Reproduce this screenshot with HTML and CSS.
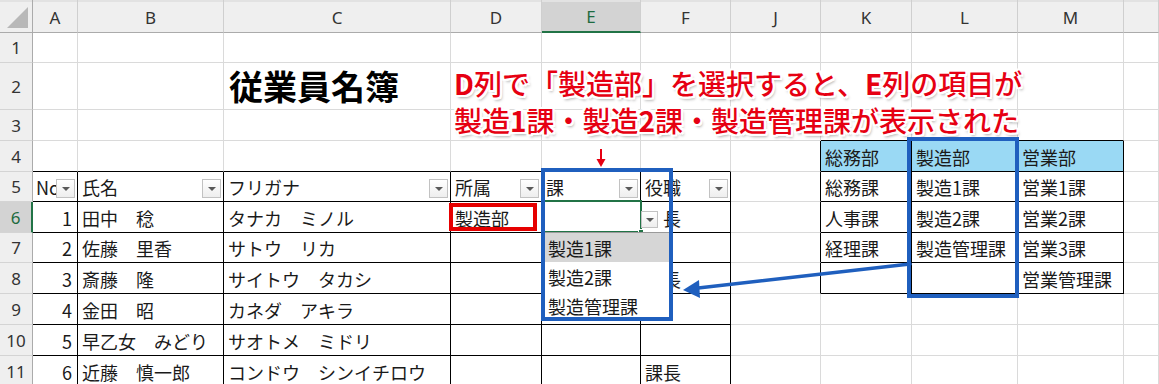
FILE: index.html
```html
<!DOCTYPE html>
<html lang="ja">
<head>
<meta charset="utf-8">
<title>従業員名簿</title>
<link rel="stylesheet" href="styles.css">
</head>
<body>
<div class="sheet">
  <div class="corner"></div>
  <div class="ch">A</div><div class="ch">B</div><div class="ch">C</div><div class="ch">D</div><div class="ch act">E</div><div class="ch">F</div><div class="ch">J</div><div class="ch">K</div><div class="ch">L</div><div class="ch">M</div><div class="ch"></div>

  <div class="rh">1</div>
  <div class="c"></div><div class="c"></div><div class="c"></div><div class="c"></div><div class="c"></div><div class="c"></div><div class="c"></div><div class="c"></div><div class="c"></div><div class="c"></div><div class="c"></div>

  <div class="rh">2</div>
  <div class="c"></div><div class="c"></div><div class="c title">従業員名簿</div><div class="c"></div><div class="c"></div><div class="c"></div><div class="c"></div><div class="c"></div><div class="c"></div><div class="c"></div><div class="c"></div>

  <div class="rh">3</div>
  <div class="c"></div><div class="c"></div><div class="c"></div><div class="c"></div><div class="c"></div><div class="c"></div><div class="c"></div><div class="c tb"></div><div class="c tb"></div><div class="c tb"></div><div class="c"></div>

  <div class="rh">4</div>
  <div class="c tb"></div><div class="c tb"></div><div class="c tb"></div><div class="c tb"></div><div class="c tb"></div><div class="c tb"></div><div class="c tr"></div><div class="c hd tr tb">総務部</div><div class="c hd tr tb">製造部</div><div class="c hd tr tb">営業部</div><div class="c"></div>

  <div class="rh">5</div>
  <div class="c tr tb clip">No.<span class="fb"></span></div>
  <div class="c tr tb">氏名<span class="fb"></span></div>
  <div class="c tr tb">フリガナ<span class="fb"></span></div>
  <div class="c tr tb">所属<span class="fb"></span></div>
  <div class="c tr tb">課<span class="fb"></span></div>
  <div class="c tr tb">役職<span class="fb"></span></div>
  <div class="c tr"></div><div class="c tr tb">総務課</div><div class="c tr tb">製造1課</div><div class="c tr tb">営業1課</div><div class="c"></div>

  <div class="rh act">6</div>
  <div class="c tr tb num">1</div><div class="c tr tb">田中　稔</div><div class="c tr tb">タナカ　ミノル</div><div class="c tr tb">製造部</div><div class="c tr tb"></div><div class="c tr tb">課長</div>
  <div class="c tr"></div><div class="c tr tb">人事課</div><div class="c tr tb">製造2課</div><div class="c tr tb">営業2課</div><div class="c"></div>

  <div class="rh">7</div>
  <div class="c tr tb num">2</div><div class="c tr tb">佐藤　里香</div><div class="c tr tb">サトウ　リカ</div><div class="c tr tb"></div><div class="c tr tb"></div><div class="c tr tb"></div>
  <div class="c tr"></div><div class="c tr tb">経理課</div><div class="c tr tb">製造管理課</div><div class="c tr tb">営業3課</div><div class="c"></div>

  <div class="rh">8</div>
  <div class="c tr tb num">3</div><div class="c tr tb">斎藤　隆</div><div class="c tr tb">サイトウ　タカシ</div><div class="c tr tb"></div><div class="c tr tb"></div><div class="c tr tb">課長</div>
  <div class="c tr"></div><div class="c tr tb"></div><div class="c tr tb"></div><div class="c tr tb">営業管理課</div><div class="c"></div>

  <div class="rh">9</div>
  <div class="c tr tb num">4</div><div class="c tr tb">金田　昭</div><div class="c tr tb">カネダ　アキラ</div><div class="c tr tb"></div><div class="c tr tb"></div><div class="c tr tb"></div>
  <div class="c"></div><div class="c"></div><div class="c"></div><div class="c"></div><div class="c"></div>

  <div class="rh">10</div>
  <div class="c tr tb num">5</div><div class="c tr tb">早乙女　みどり</div><div class="c tr tb">サオトメ　ミドリ</div><div class="c tr tb"></div><div class="c tr tb"></div><div class="c tr tb"></div>
  <div class="c"></div><div class="c"></div><div class="c"></div><div class="c"></div><div class="c"></div>

  <div class="rh">11</div>
  <div class="c tr tb num">6</div><div class="c tr tb">近藤　慎一郎</div><div class="c tr tb">コンドウ　シンイチロウ</div><div class="c tr tb"></div><div class="c tr tb"></div><div class="c tr tb">課長</div>
  <div class="c"></div><div class="c"></div><div class="c"></div><div class="c"></div><div class="c"></div>
</div>

<div class="note">
  <div class="line"><b>D</b>列で「製造部」を選択すると、<b>E</b>列の項目が</div>
  <div class="line">製造<b>1</b>課・製造<b>2</b>課・製造管理課が表示された</div>
</div>

<div class="redbox"></div>
<div class="active-cell"><span class="handle"></span></div>
<span class="ddbtn"></span>
<div class="ddlist">
  <div class="item sel">製造1課</div>
  <div class="item">製造2課</div>
  <div class="item">製造管理課</div>
</div>
<div class="bbox bbox-e"></div>
<div class="bbox bbox-l"></div>

<svg class="rarrow" width="12" height="20" viewBox="0 0 12 20">
  <line x1="6" y1="1" x2="6" y2="12" stroke="#e60012" stroke-width="2"/>
  <polygon points="1.5,11 10.5,11 6,19" fill="#e60012"/>
</svg>

<svg class="barrow" width="236" height="50" viewBox="0 0 236 50">
  <line x1="230" y1="9" x2="16" y2="33.3" stroke="#1f5fbe" stroke-width="3.5" stroke-linecap="round"/>
  <polygon points="3,35 19,25 20,43" fill="#1f5fbe"/>
</svg>
</body>
</html>
```

FILE: styles.css
```css
* { box-sizing: border-box; margin: 0; padding: 0; }

body {
  margin: 0;
  width: 1159px;
  height: 384px;
  overflow: hidden;
  position: relative;
  background: #fff;
  color: #1a1a1a;
  font-family: "Noto Sans CJK JP", "Noto Sans", sans-serif;
}

.sheet {
  display: grid;
  grid-template-columns: 33px 45px 146px 227px 91px 99px 90px 90px 91px 106px 106px 1fr;
  grid-template-rows: 33px 30px 47px 31px 31px 30px 31px 30px 31px 31px 31px 31px;
}

.corner {
  position: relative;
  background: #efefef;
  border-right: 1px solid #ababab;
  border-bottom: 1px solid #ababab;
  box-shadow: inset 0 2px 0 #e2e2e2;
}
.corner::after {
  content: "";
  position: absolute;
  right: 4px;
  bottom: 4px;
  border-left: 21px solid transparent;
  border-bottom: 21px solid #b8b8b8;
}

.ch {
  display: flex;
  align-items: center;
  justify-content: center;
  background: #efefef;
  border-right: 1px solid #cfcfcf;
  border-bottom: 1px solid #ababab;
  box-shadow: inset 0 2px 0 #e2e2e2;
  font-family: "Noto Sans", "Noto Sans CJK JP", sans-serif;
  font-size: 17px;
  color: #333;
  padding-top: 2px;
}
.ch.act {
  background: #d3d3d3;
  color: #1d6b40;
  border-bottom: 2px solid #217346;
}

.rh {
  display: flex;
  align-items: center;
  justify-content: center;
  background: #efefef;
  border-right: 1px solid #ababab;
  border-bottom: 1px solid #d4d4d4;
  font-family: "Noto Sans", "Noto Sans CJK JP", sans-serif;
  font-size: 17px;
  color: #333;
}
.rh.act {
  background: #d3d3d3;
  color: #1d6b40;
  border-right: 2px solid #217346;
}

.c {
  position: relative;
  display: flex;
  align-items: center;
  padding: 1px 4px 0;
  border-right: 1px solid #dadada;
  border-bottom: 1px solid #dadada;
  font-size: 18px;
  white-space: nowrap;
}
.c.tr { border-right-color: #000; }
.c.tb { border-bottom-color: #000; }
.c.hd { background: #9ad9f4; }
.c.num { justify-content: flex-end; padding-right: 5px; }
.c.clip { overflow: hidden; padding-left: 3px; }

.c.title {
  align-items: flex-end;
  padding: 0 0 2px 5px;
  font-size: 34px;
  font-weight: 700;
  color: #000;
  line-height: 1.25;
}

.fb {
  position: absolute;
  right: 2px;
  top: 7px;
  width: 19px;
  height: 19px;
  border: 1px solid #c2c2c2;
  background: linear-gradient(#ffffff, #eeeeee);
}
.fb::after {
  content: "";
  position: absolute;
  left: 5px;
  top: 7px;
  border-left: 4px solid transparent;
  border-right: 4px solid transparent;
  border-top: 4px solid #595959;
}

.note {
  position: absolute;
  left: 454px;
  top: 65px;
  color: #e60012;
  font-size: 28px;
  font-weight: 500;
  line-height: 37px;
  white-space: nowrap;
  text-shadow:
    1px 0 0 #fff, -1px 0 0 #fff, 0 1px 0 #fff, 0 -1px 0 #fff,
    2px 0 0 #fff, -2px 0 0 #fff, 0 2px 0 #fff, 0 -2px 0 #fff,
    2px 2px 0 #fff, -2px -2px 0 #fff, 2px -2px 0 #fff, -2px 2px 0 #fff,
    2px 3px 3px rgba(0, 0, 0, 0.35);
}
.note b { font-weight: 700; }

.redbox {
  position: absolute;
  left: 449px;
  top: 203px;
  width: 88px;
  height: 28px;
  border: 4px solid #e60000;
}

.active-cell {
  position: absolute;
  left: 541px;
  top: 200px;
  width: 101px;
  height: 33px;
  border: 2px solid #217346;
}
.handle {
  position: absolute;
  right: -4px;
  bottom: -4px;
  width: 6px;
  height: 6px;
  background: #217346;
  border: 1px solid #fff;
}

.ddbtn {
  position: absolute;
  left: 641px;
  top: 211px;
  width: 17px;
  height: 17px;
  border: 1px solid #c2c2c2;
  background: linear-gradient(#ffffff, #eeeeee);
  box-shadow: 3px 0 0 2px #fff;
}
.ddbtn::after {
  content: "";
  position: absolute;
  left: 4px;
  top: 6px;
  border-left: 4px solid transparent;
  border-right: 4px solid transparent;
  border-top: 4px solid #595959;
}

.ddlist {
  position: absolute;
  left: 544px;
  top: 232px;
  width: 127px;
  height: 88px;
  background: #fff;
  border: 1px solid #9a9a9a;
}
.item {
  height: 29px;
  display: flex;
  align-items: center;
  padding: 1px 0 0 3px;
  font-size: 18px;
  white-space: nowrap;
}
.item.sel { background: #d6d6d6; }

.bbox {
  position: absolute;
  border: 4px solid #1f5fbe;
}
.bbox-e { left: 541px; top: 168px; width: 132px; height: 153px; }
.bbox-l { left: 907px; top: 137px; width: 112px; height: 161px; }

.rarrow { position: absolute; left: 595px; top: 148px; }
.barrow { position: absolute; left: 680px; top: 255px; }
```
